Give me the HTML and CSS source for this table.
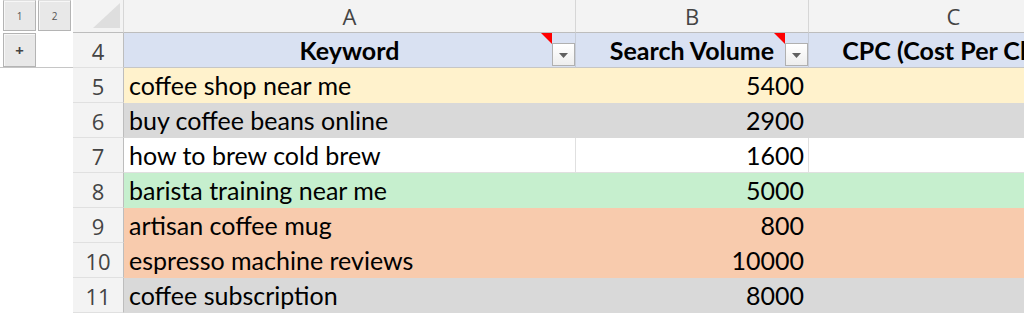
FILE: index.html
```html
<!DOCTYPE html>
<html>
<head>
<meta charset="utf-8">
<link rel="stylesheet" href="styles.css">
</head>
<body>
<div class="sheet">
  <div class="outline outline-top">
    <span class="lvl">1</span><span class="lvl">2</span>
  </div>
  <div class="corner"><span class="corner-tri"></span></div>
  <div class="colhead">A</div>
  <div class="colhead">B</div>
  <div class="colhead">C</div>

  <div class="outline outline-row4"><span class="lvl plus">+</span></div>
  <div class="rowhead">4</div>
  <div class="cell th">Keyword<span class="note"></span><span class="filter"></span></div>
  <div class="cell th">Search Volume<span class="note"></span><span class="filter"></span></div>
  <div class="cell th th-last">CPC (Cost Per Click)</div>

  <div class="outline"></div>
  <div class="rowhead">5</div>
  <div class="cell yellow">coffee shop near me</div>
  <div class="cell yellow num">5400</div>
  <div class="cell yellow"></div>

  <div class="outline"></div>
  <div class="rowhead">6</div>
  <div class="cell gray">buy coffee beans online</div>
  <div class="cell gray num">2900</div>
  <div class="cell gray"></div>

  <div class="outline"></div>
  <div class="rowhead">7</div>
  <div class="cell">how to brew cold brew</div>
  <div class="cell num">1600</div>
  <div class="cell"></div>

  <div class="outline"></div>
  <div class="rowhead">8</div>
  <div class="cell green">barista training near me</div>
  <div class="cell green num">5000</div>
  <div class="cell green"></div>

  <div class="outline"></div>
  <div class="rowhead">9</div>
  <div class="cell orange">artisan coffee mug</div>
  <div class="cell orange num">800</div>
  <div class="cell orange"></div>

  <div class="outline"></div>
  <div class="rowhead">10</div>
  <div class="cell orange">espresso machine reviews</div>
  <div class="cell orange num">10000</div>
  <div class="cell orange"></div>

  <div class="outline"></div>
  <div class="rowhead">11</div>
  <div class="cell gray">coffee subscription</div>
  <div class="cell gray num">8000</div>
  <div class="cell gray"></div>
</div>
</body>
</html>
```

FILE: styles.css
```css
* { box-sizing: border-box; }

html, body {
  margin: 0;
  padding: 0;
  background: #ffffff;
  overflow: hidden;
}

.sheet {
  display: grid;
  grid-template-columns: 73px 51px 452px 233px 290px;
  grid-template-rows: 33px repeat(8, 35px);
  font-family: Lato, "Liberation Sans", sans-serif;
  width: 1099px;
}

.outline {
  background: #ffffff;
}

.outline-top {
  display: flex;
  gap: 2px;
  padding: 0 0 0 3px;
}

.outline-row4 {
  padding: 0 0 0 3px;
  border-bottom: 1px solid #c6c6c6;
}

.lvl {
  width: 33px;
  height: 31px;
  background: #e8e8e8;
  border: 1px solid #b4b4b4;
  border-top-color: #e0e0e0;
  box-shadow: inset 1px 1px 0 #f7f7f7;
  display: flex;
  align-items: center;
  justify-content: center;
  font-family: "Open Sans", sans-serif;
  font-size: 10px;
  color: #555555;
}

.plus {
  height: 34px;
  border-top-color: #b4b4b4;
  font-size: 15px;
  font-weight: 700;
  color: #444444;
}

.corner {
  position: relative;
  background: #f3f3f3;
  border-right: 1px solid #d6d6d6;
  border-bottom: 1px solid #bdbdbd;
}

.corner-tri {
  position: absolute;
  right: 3px;
  bottom: 4px;
  width: 27px;
  height: 25px;
  background: #dedede;
  clip-path: polygon(100% 0, 100% 100%, 0 100%);
}

.colhead {
  background: #f3f3f3;
  border-right: 1px solid #d6d6d6;
  border-bottom: 1px solid #bdbdbd;
  display: flex;
  align-items: center;
  justify-content: center;
  font-family: "Open Sans", sans-serif;
  font-size: 22px;
  color: #444444;
  padding-bottom: 1px;
}

.rowhead {
  background: #f3f3f3;
  border-right: 1px solid #bdbdbd;
  border-bottom: 1px solid #e0e0e0;
  display: flex;
  align-items: center;
  justify-content: center;
  font-family: "Open Sans", sans-serif;
  font-size: 22px;
  color: #444444;
  padding-top: 1px;
}

.cell {
  position: relative;
  background: #ffffff;
  border-right: 1px solid #e0e0e0;
  border-bottom: 1px solid #e0e0e0;
  font-size: 25px;
  line-height: 34px;
  color: #000000;
  padding: 0 5px;
  white-space: nowrap;
  overflow: visible;
}

.num { text-align: right; padding-right: 4px; }

.th {
  background: #d9e1f2;
  border-right-color: #c6ccd8;
  border-bottom-color: #c6c6c6;
  font-weight: 700;
  text-align: center;
}

.th-last { overflow: hidden; }

.yellow { background: #fff2cc; border-color: #fff2cc; }
.gray { background: #d9d9d9; border-color: #d9d9d9; }
.green { background: #c6efce; border-color: #c6efce; }
.orange { background: #f8cbad; border-color: #f8cbad; }

.note {
  position: absolute;
  top: 0;
  right: 23px;
  width: 11px;
  height: 11px;
  background: #ff0000;
  clip-path: polygon(0 0, 100% 0, 100% 100%);
}

.filter {
  position: absolute;
  right: 0;
  bottom: 1px;
  width: 23px;
  height: 23px;
  background: linear-gradient(#ffffff, #eeeeee);
  border: 1px solid #b0b0b0;
}

.filter::after {
  content: "";
  position: absolute;
  left: 6px;
  top: 9px;
  width: 9px;
  height: 5px;
  background: #606060;
  clip-path: polygon(0 0, 100% 0, 50% 100%);
}
```
